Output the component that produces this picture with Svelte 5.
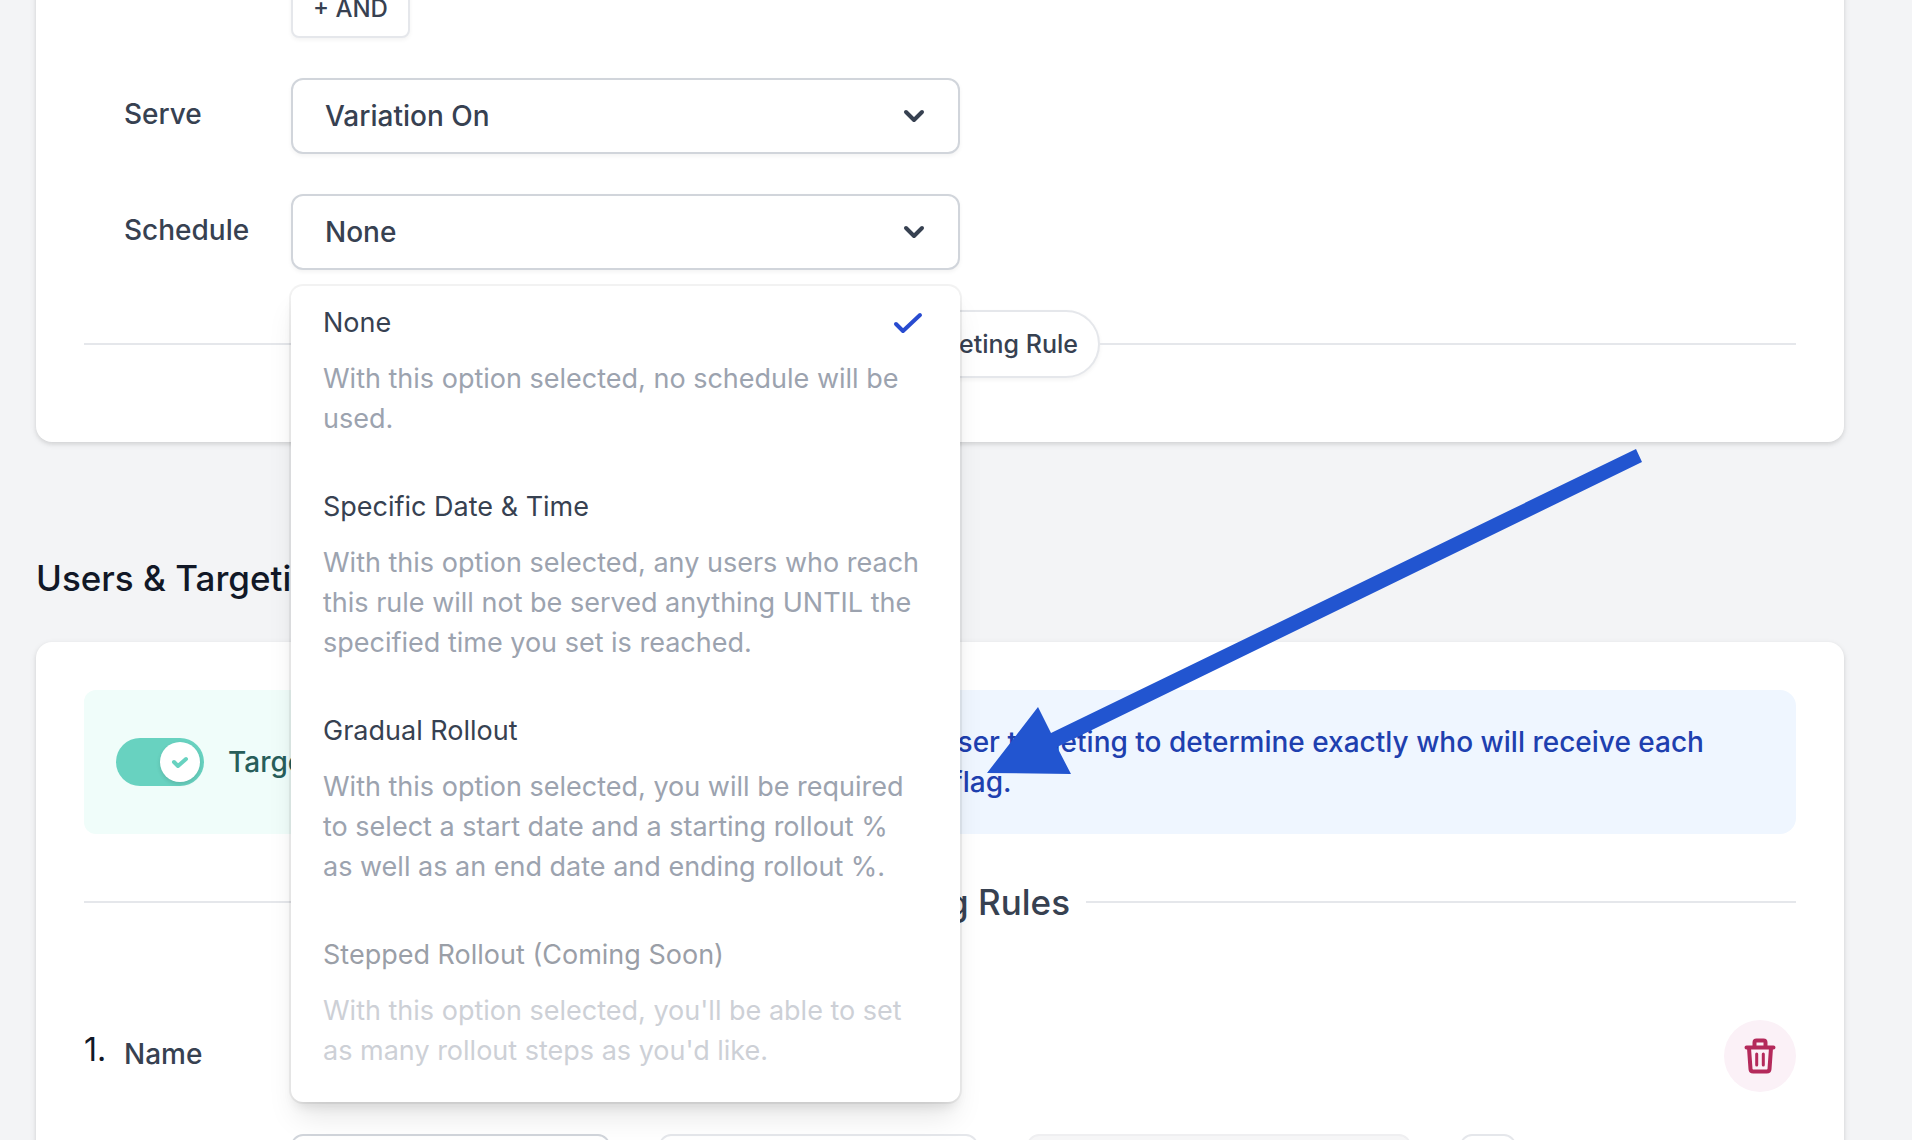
<script>
  const options = [
    { title: 'None', text: 'With this option selected, no schedule will be used.' },
    { title: 'Specific Date & Time', text: 'With this option selected, any users who reach this rule will not be served anything UNTIL the specified time you set is reached.' },
    { title: 'Gradual Rollout', text: 'With this option selected, you will be required to select a start date and a starting rollout % as\u00a0well as an end date and ending rollout %.' },
    { title: 'Stepped Rollout (Coming Soon)', text: "With this option selected, you'll be able to set as many rollout steps as you'd like.", disabled: true }
  ];
  let schedule = $state('None');
  let targeting = $state(true);
</script>

{#snippet chevron()}
  <svg class="chevron" viewBox="0 0 24 16" aria-hidden="true"><path d="M4 4l8 8 8-8" /></svg>
{/snippet}

<main class="page">
  <section class="card first">
    <div class="form">
      <div class="row"><span class="label"></span><button class="and" type="button">+ AND</button></div>
      <div class="row">
        <label class="label" for="serve">Serve</label>
        <div class="field">
          <select id="serve"><option>Variation On</option><option>Variation Off</option></select>
          {@render chevron()}
        </div>
      </div>
      <div class="row">
        <label class="label" for="schedule">Schedule</label>
        <div class="field">
          <select id="schedule" bind:value={schedule}>
            {#each options as o}<option disabled={o.disabled}>{o.title}</option>{/each}
          </select>
          {@render chevron()}
          <div class="menu">
            {#each options as o}
              <button type="button" class="option" disabled={o.disabled} onclick={() => (schedule = o.title)}>
                <span class="title">{o.title}
                  {#if schedule === o.title}
                    <svg class="tick" viewBox="0 0 32 24" aria-hidden="true"><path d="M4 13l7 7L28 4" /></svg>
                  {/if}
                </span>
                <span class="desc">{o.text}</span>
              </button>
            {/each}
          </div>
        </div>
      </div>
    </div>
    <div class="divider pill-row">
      <button class="pill" type="button">+ Add Targeting Rule</button>
    </div>
  </section>

  <h2>Users &amp; Targeting Rules</h2>

  <section class="card">
    <div class="banner">
      <label class="toggle">
        <input type="checkbox" bind:checked={targeting} />
        <span class="track"><span class="knob"><svg viewBox="0 0 20 16" aria-hidden="true"><path d="M4 8l4 4 8-7" /></svg></span></span>
        Targeting On
      </label>
      <p class="info">You can use user targeting to determine exactly who will receive each variation of a flag.</p>
    </div>
    <div class="divider heading"><h3>Targeting Rules</h3></div>
    <div class="rule">
      <span class="number">1.</span>
      <label class="label" for="name">Name</label>
      <input id="name" class="box name" type="text" />
      <button class="trash" type="button" aria-label="Delete rule">
        <svg viewBox="0 0 32 36" aria-hidden="true">
          <path d="M2.500 9.500h27M10.500 9V4.500q0-2 2-2h7q2 0 2 2V9M5 10l1.500 21q.2 2.500 2.700 2.500h13.600q2.500 0 2.700-2.500L27 10" />
          <path class="thin" d="M12.700 16v11M19.300 16v11" />
        </svg>
      </button>
    </div>
    <div class="conditions">
      <select class="box" aria-label="Attribute"><option></option></select>
      <select class="box light" aria-label="Comparator"><option></option></select>
      <input class="box muted" aria-label="Value" disabled />
      <button class="box light small" type="button" aria-label="Remove condition"></button>
    </div>
  </section>

  <svg class="arrow" viewBox="0 0 656 326" aria-hidden="true">
    <polygon points="0,324 51,258 64,284 649,0 655,13 70,298 84,325" />
  </svg>
</main>

<style>
  :global(body) { margin: 0; }
  * { box-sizing: border-box; }
  .page {
    position: relative;
    height: 100vh;
    overflow: hidden;
    padding: 0 68px 0 36px;
    background: #f3f4f6;
    color: #374151;
    font: 500 28px/40px Inter, 'Liberation Sans', sans-serif;
  }
  button, input, select { font: inherit; color: inherit; margin: 0; }
  .card {
    padding: 48px;
    border-radius: 16px;
    background: #fff;
    box-shadow: 0 2px 6px rgba(0, 0, 0, 0.1), 0 2px 4px rgba(0, 0, 0, 0.06);
  }
  .first { margin-top: -70px; padding-bottom: 64px; }
  .form { display: flex; flex-direction: column; gap: 40px; padding-left: 40px; }
  .row { display: flex; align-items: flex-start; }
  .label { flex: none; width: 167px; padding-top: 16px; }
  .and {
    height: 60px;
    padding: 2px 20px 0;
    border: 2px solid #e5e7eb;
    border-radius: 8px;
    background: #fff;
    font-size: 24px;
    line-height: 32px;
    box-shadow: 0 2px 4px rgba(0, 0, 0, 0.05);
  }
  .field { position: relative; flex: 0 1 669px; }
  .field select {
    display: block;
    width: 100%;
    height: 76px;
    padding: 0 80px 0 32px;
    appearance: none;
    border: 2px solid #d1d5db;
    border-radius: 12px;
    background: #fff;
    box-shadow: 0 2px 4px rgba(0, 0, 0, 0.05);
  }
  svg path { fill: none; stroke: currentColor; stroke-linecap: round; stroke-linejoin: round; }
  .chevron { position: absolute; right: 34px; top: 30px; width: 24px; height: 16px; pointer-events: none; }
  .chevron path { stroke-width: 4; }
  .menu {
    position: absolute;
    z-index: 2;
    top: calc(100% + 16px);
    left: 0;
    right: 0;
    border-radius: 12px;
    background: #fff;
    font-size: 27px;
    box-shadow: 0 0 0 2px rgba(0, 0, 0, 0.05), 0 20px 30px -6px rgba(0, 0, 0, 0.1), 0 8px 12px -4px rgba(0, 0, 0, 0.1);
  }
  .option {
    display: block;
    width: 100%;
    padding: 17px 32px 31px;
    border: 0;
    background: none;
    font-weight: 400;
    text-align: left;
  }
  .title { display: flex; justify-content: space-between; align-items: center; margin-bottom: 16px; }
  .desc { display: block; color: #9ca3af; }
  .option:disabled { opacity: 0.5; }
  .tick { width: 32px; height: 24px; margin-right: 4px; color: #284bd0; }
  .tick path { stroke-width: 4; }
  .divider { display: flex; align-items: center; }
  .divider::before, .divider::after { content: ''; flex: 1; height: 2px; background: #e5e7eb; }
  .pill-row { margin-top: 40px; }
  .pill {
    display: flex;
    align-items: center;
    justify-content: flex-end;
    min-width: 320px;
    height: 68px;
    padding: 0 20px;
    border: 2px solid #e5e7eb;
    border-radius: 34px;
    background: #fff;
    font-size: 25px;
    box-shadow: 0 2px 4px rgba(0, 0, 0, 0.05);
  }
  h2, h3 { margin: 0; font-size: 35px; line-height: 40px; font-weight: 500; }
  h2 { margin: 116px 0 44px; color: #111827; }
  .banner { display: grid; grid-template-columns: 560px 1fr; gap: 32px; }
  .toggle {
    display: flex;
    align-items: center;
    padding: 32px;
    border-radius: 12px;
    background: #f0fdfa;
    color: #285e5a;
  }
  .toggle input { position: absolute; opacity: 0; }
  .track { display: flex; width: 88px; height: 48px; padding: 4px; margin-right: 24px; border-radius: 24px; background: #cbd5e1; }
  .toggle input:checked + .track { justify-content: flex-end; background: #68d2c0; }
  .knob {
    display: grid;
    place-items: center;
    width: 40px;
    height: 40px;
    border-radius: 50%;
    background: #fff;
    color: #68d2c0;
    box-shadow: 0 2px 4px rgba(0, 0, 0, 0.12);
  }
  .knob svg { width: 20px; height: 16px; }
  .knob path { stroke-width: 4; }
  .info { margin: 0; padding: 32px 80px 32px 94px; border-radius: 16px; background: #eff6ff; color: #1e40af; }
  .heading { margin: 48px 0 96px; }
  .heading h3 { padding: 0 16px; }
  .rule { display: flex; align-items: flex-start; }
  .number { flex: none; width: 40px; padding-top: 12px; color: #111827; font-size: 32px; font-weight: 400; }
  .box { height: 76px; min-width: 0; appearance: none; border: 2px solid #d1d5db; border-radius: 12px; background: #fff; }
  .name { flex: 0 1 669px; }
  .trash {
    display: grid;
    place-items: center;
    width: 72px;
    height: 72px;
    margin: 2px 0 0 auto;
    padding: 0;
    border: 0;
    border-radius: 50%;
    background: #fbf1f7;
    color: #b42a5b;
  }
  .trash svg { width: 32px; height: 36px; }
  .trash path { stroke-width: 4; }
  .trash .thin { stroke-width: 3; }
  .conditions {
    display: grid;
    grid-template-columns: 319px 319px 384px 56px;
    gap: 49px;
    margin-top: 40px;
    padding-left: 207px;
  }
  .light { border-color: #e5e7eb; }
  .muted { border-color: #efeff1; background: #f6f6f7; }
  .arrow { position: absolute; z-index: 3; left: 987px; top: 449px; width: 656px; height: 326px; fill: #2255d0; pointer-events: none; }
</style>
